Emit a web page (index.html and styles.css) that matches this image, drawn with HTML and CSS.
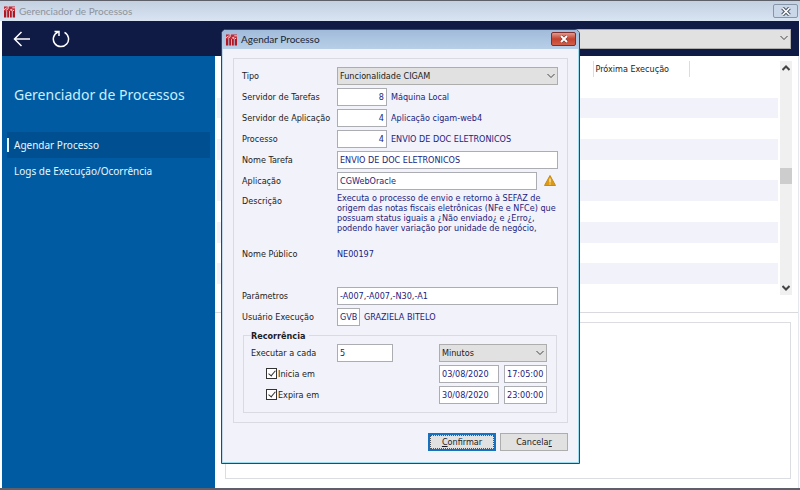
FILE: index.html
```html
<!DOCTYPE html>
<html lang="pt-BR">
<head>
<meta charset="utf-8">
<title>Gerenciador de Processos</title>
<link rel="stylesheet" href="styles.css">
</head>
<body>
<svg class="defs" width="0" height="0" aria-hidden="true">
  <symbol id="logo" viewBox="0 0 12 13">
    <path d="M0 1h12v5H0z" fill="#c22a34"/>
    <path d="M0 6h2.500v7H0zM3.500 6h2v7h-2zM6.500 6h2v7h-2zM9.500 6h2.500v7H9.500z" fill="#b01622"/>
    <path d="M0 4.500L3 2.500M4.500 0.500v3L2 5.500M6.500 5l2-1v2M9 2.500h3M9.500 6l1.500-1" fill="none" stroke="#f6e4e8"/>
  </symbol>
  <symbol id="chevron" viewBox="0 0 8 6"><path d="M0.500 1L4 4.500 7.500 1" fill="none" stroke="currentColor"/></symbol>
</svg>
<div class="window">
  <header class="titlebar">
    <svg class="logo"><use href="#logo"/></svg>
    <span class="title">Gerenciador de Processos</span>
    <button class="close" aria-label="Fechar janela"><svg width="12" height="9" viewBox="0 0 12 9"><path d="M2.500 1l7 7M9.500 1l-7 7" stroke="#4d5866" stroke-width="3.600"/><path d="M2.500 1l7 7M9.500 1l-7 7" stroke="#fff" stroke-width="1.600"/></svg></button>
  </header>
  <div class="toolbar">
    <button class="tool" aria-label="Voltar"><svg width="18" height="18" viewBox="0 0 18 18"><path d="M17 9H1.500M8.500 2L1.500 9l7 7"/></svg></button>
    <button class="tool" aria-label="Atualizar"><svg width="18" height="18" viewBox="0 0 18 18"><path d="M12.500 2.300A7.600 7.600 0 1 1 6 2M2.500 1.500h4.500v4.500"/></svg></button>
    <div class="combo filter"><select aria-label="Filtro"><option></option></select><svg><use href="#chevron"/></svg></div>
  </div>
  <div class="body">
    <nav class="sidebar">
      <h1>Gerenciador de Processos</h1>
      <a class="active" href="#agendar">Agendar Processo</a>
      <a href="#logs">Logs de Execução/Ocorrência</a>
    </nav>
    <main class="main">
      <div class="list">
        <div class="grid">
          <table>
            <thead><tr><th class="rest"></th><th class="next">Próxima Execução</th><th class="last"></th></tr></thead>
            <tbody>
              <tr><td colspan="3"></td></tr><tr><td colspan="3"></td></tr><tr><td colspan="3"></td></tr><tr><td colspan="3"></td></tr><tr><td colspan="3"></td></tr>
              <tr><td colspan="3"></td></tr><tr><td colspan="3"></td></tr><tr><td colspan="3"></td></tr><tr><td colspan="3"></td></tr><tr><td colspan="3"></td></tr>
            </tbody>
          </table>
        </div>
        <div class="scroll">
          <svg class="up"><use href="#chevron"/></svg>
          <div class="thumb"></div>
          <svg class="down"><use href="#chevron"/></svg>
        </div>
      </div>
      <div class="detail"></div>
    </main>
  </div>
</div>

<div class="overlay">
  <form class="dialog" role="dialog" aria-labelledby="dlg-title">
    <div class="dialog-bar">
      <svg class="logo"><use href="#logo"/></svg>
      <span class="title" id="dlg-title">Agendar Processo</span>
      <button type="button" class="close red" aria-label="Fechar"><svg width="10" height="8" viewBox="0 0 10 8"><path d="M2 1l6 6M8 1L2 7" stroke="#6b3030" stroke-width="3"/><path d="M2 1l6 6M8 1L2 7" stroke="#fff" stroke-width="2"/></svg></button>
    </div>
    <div class="panel">
      <div class="row"><label for="tipo">Tipo</label><div class="combo wide"><select id="tipo"><option>Funcionalidade CIGAM</option></select><svg><use href="#chevron"/></svg></div></div>
      <div class="row"><label for="st">Servidor de Tarefas</label><input id="st" class="num" value="8"><span class="value">Máquina Local</span></div>
      <div class="row"><label for="sa">Servidor de Aplicação</label><input id="sa" class="num" value="4"><span class="value">Aplicação cigam-web4</span></div>
      <div class="row"><label for="pr">Processo</label><input id="pr" class="num" value="4"><span class="value">ENVIO DE DOC ELETRONICOS</span></div>
      <div class="row"><label for="nt">Nome Tarefa</label><input id="nt" class="wide" value="ENVIO DE DOC ELETRONICOS"></div>
      <div class="row"><label for="ap">Aplicação</label><input id="ap" class="wide" value="CGWebOracle"><svg class="warn" width="12" height="11" viewBox="0 0 12 11"><path d="M6 0.500L11.500 10.500H0.500z" fill="#dd9a12" stroke="#c98a10" stroke-linejoin="round"/><path d="M6 3.500v4M6 8.500v1" stroke="#fff3d0" stroke-width="1.200"/></svg></div>
      <div class="row tall"><span class="label">Descrição</span><p class="value">Executa o processo de envio e retorno à SEFAZ de<br>origem das notas fiscais eletrônicas (NFe e NFCe) que<br>possuam status iguais a ¿Não enviado¿ e ¿Erro¿,<br>podendo haver variação por unidade de negócio,</p></div>
      <div class="row public"><span class="label">Nome Público</span><span class="value">NE00197</span></div>
      <div class="row"><label for="pa">Parâmetros</label><input id="pa" class="wide" value="-A007,-A007,-N30,-A1"></div>
      <div class="row"><label for="us">Usuário Execução</label><input id="us" class="user" value="GVB"><span class="value">GRAZIELA BITELO</span></div>
      <fieldset>
        <legend>Recorrência</legend>
        <div class="recur">
          <label for="ex">Executar a cada</label><input id="ex" value="5"><div class="combo unit"><select aria-label="Unidade"><option>Minutos</option></select><svg><use href="#chevron"/></svg></div>
          <label class="check"><input type="checkbox" checked>Inicia em</label><input class="date" aria-label="Data de início" value="03/08/2020"><input class="time" aria-label="Hora de início" value="17:05:00">
          <label class="check"><input type="checkbox" checked>Expira em</label><input class="date" aria-label="Data de expiração" value="30/08/2020"><input class="time" aria-label="Hora de expiração" value="23:00:00">
        </div>
      </fieldset>
    </div>
    <div class="actions">
      <button type="button" class="btn primary"><span><u>C</u>onfirmar</span></button>
      <button type="button" class="btn"><span>Cancela<u>r</u></span></button>
    </div>
  </form>
</div>
</body>
</html>
```
FILE: styles.css
```css
* { box-sizing: border-box; }
body {
  margin: 0;
  color: #1c1c22;
  font: 9px/12px "DejaVu Sans Condensed", "DejaVu Sans", sans-serif;
}
button, input, select { font: inherit; color: inherit; margin: 0; }
.defs { position: absolute; }

.window {
  display: flex;
  flex-direction: column;
  min-height: 100vh;
  border: solid #5d6068;
  border-width: 1px 0 2px;
  background: #fff;
}
.titlebar {
  display: flex;
  align-items: center;
  gap: 4px;
  height: 20px;
  padding: 0 2px 0 4px;
  background: linear-gradient(#c3d0e0, #d8e4f2);
}
.logo { width: 11px; height: 13px; flex: none; }
.title { flex: 1; font: 10px/16px Lato, sans-serif; color: #8d939c; }
.close {
  display: flex;
  align-items: center;
  justify-content: center;
  width: 25px;
  height: 14px;
  padding: 0;
  border: 1px solid #8695a8;
  border-radius: 2px;
  background: #c9d7e8;
}
.toolbar {
  display: flex;
  align-items: center;
  gap: 21px;
  height: 35px;
  margin: 0 1px 0 2px;
  padding: 0 8px 0 11px;
  background: #101b45;
}
.tool { display: flex; padding: 0; border: 0; background: none; }
.tool svg { fill: none; stroke: #fff; stroke-width: 1.5; }

.combo { position: relative; height: 18px; color: #1c1c22; }
.combo select {
  display: block;
  width: 100%;
  height: 100%;
  padding: 0 2px;
  border: 1px solid #adadad;
  border-radius: 0;
  background: #e1e1e1;
  appearance: none;
}
.combo svg {
  position: absolute;
  right: 3px;
  top: 6px;
  width: 8px;
  height: 6px;
  color: #444;
  pointer-events: none;
}
.filter { flex: 1; height: 20px; margin-left: 145px; }

.body { display: flex; flex: 1; margin: 0 1px 0 2px; }
.sidebar { width: 213px; padding-top: 29px; background: #005ba3; }
.sidebar h1 {
  margin: 0 0 27px;
  padding-left: 12px;
  font: 14px/20px "Noto Sans", sans-serif;
  color: #c8f0ff;
}
.sidebar a {
  display: block;
  margin: 0 5px 0 5px;
  padding: 0 7px;
  font: 10px/26px "Noto Sans", sans-serif;
  color: #e6f7ff;
  text-decoration: none;
}
.sidebar a.active { background: linear-gradient(#e6f7ff, #e6f7ff) 0 50% / 2px 14px no-repeat, #005091; }

.main { display: flex; flex: 1; flex-direction: column; border-right: 1px solid #e4e7ee; }
.list {
  display: flex;
  height: 257px;
  gap: 2px;
  padding: 5px 6px 17px 2px;
  border-bottom: 1px solid #d9dade;
}
.grid { flex: 1; }
table { width: 100%; height: 223px; border-collapse: collapse; table-layout: fixed; }
th { height: 16px; padding: 0 0 0 2px; font-weight: 400; text-align: left; }
.next { width: 96px; border: solid #dcdce0; border-width: 0 1px; }
.last { width: 89px; }
td { padding: 0; }
tbody tr:nth-child(even) { background: #f1f2fa; }
.scroll {
  display: flex;
  flex-direction: column;
  align-items: center;
  width: 12px;
  padding: 4px 0;
  background: #f0f0f0;
}
.scroll svg { width: 8px; height: 6px; stroke-width: 2; color: #444; }
.up { transform: rotate(180deg); }
.thumb { width: 12px; height: 16px; margin: 97px 0 auto; background: #cdcdcd; }
.detail { flex: 1; margin: 9px 7px 9px 10px; border: 1px solid #dcdde2; }

.overlay {
  position: fixed;
  inset: 0;
  display: grid;
  place-items: center;
  padding: 2px 0 0 1px;
}
.dialog {
  width: 359px;
  padding: 0 11px 12px;
  border: 1px solid #2c4a5c;
  border-radius: 5px 5px 0 0;
  background: #f1f2fa;
  box-shadow: inset -1px -1px #9fdcf0, inset 1px 0 #c3d6e8;
}
.dialog-bar {
  display: flex;
  align-items: center;
  gap: 4px;
  height: 19px;
  margin: 0 -11px 9px;
  padding: 0 3px 0 4px;
  border-radius: 4px 4px 0 0;
  background: linear-gradient(#a0bbd9, #b9cfe8);
}
.dialog-bar .title { color: #1a2535; }
.red { border-color: #7d2f30; background: linear-gradient(#e09a8c, #c4422f 50%, #d0604a); }

.panel {
  display: flex;
  flex-direction: column;
  gap: 3px;
  padding: 8px 9px 9px 8px;
  border: 1px solid #d9dae2;
}
.row { display: flex; align-items: center; min-height: 18px; }
.row > label, .label { width: 95px; flex: none; }
.value { margin: 0 0 0 4px; color: #1c1c7c; }
.tall, .public { align-items: flex-start; }
.tall { height: 52px; }
.tall .label { padding-top: 2px; }
.tall .value { margin: 0; line-height: 10px; white-space: nowrap; }
.public { height: 36px; }
.public .value { margin: 0; }
.panel input:not([type]) {
  min-width: 0;
  height: 18px;
  padding: 0 2px;
  border: 1px solid #abadb3;
  background: #fff;
  color: #1c1c7c;
}
.panel .num { width: 50px; text-align: right; }
.user { width: 23px; }
.wide { flex: 1; }
.warn { margin: 0 2px 0 7px; }

fieldset {
  min-width: 0;
  margin: 0 1px 0 1px;
  padding: 1px 9px 8px 7px;
  border: 1px solid #d9dae2;
}
legend { padding: 0 4px 0 0; font-weight: 700; line-height: 14px; }
.recur {
  display: grid;
  grid-template-columns: 86px 56px 1fr 65px 43px;
  grid-auto-rows: 18px;
  gap: 3px 0;
  align-items: center;
}
.unit { grid-column: 4 / 6; }
.check { grid-column: 1 / 3; display: flex; align-items: center; gap: 1px; padding-left: 15px; }
.check input {
  width: 11px;
  height: 11px;
  border: 1px solid #333;
  background: #fff;
  appearance: none;
}
/* The tick is an L-shaped border turned by 45 degrees. */
.check input:checked::before {
  content: "";
  display: block;
  width: 3px;
  height: 6px;
  margin: 0 0 0 3px;
  border: solid #333;
  border-width: 0 1px 1px 0;
  transform: rotate(40deg);
}
.date { grid-column: 4; width: 60px; }
.time { grid-column: 5; }
.actions { display: flex; justify-content: flex-end; gap: 4px; margin-top: 10px; }
.btn {
  width: 68px;
  height: 18px;
  padding: 0;
  border: 1px solid #adadad;
  background: #e1e1e1;
}
.primary { border: 2px solid #1672c0; outline: 1px dotted #555; outline-offset: -3px; }
```
